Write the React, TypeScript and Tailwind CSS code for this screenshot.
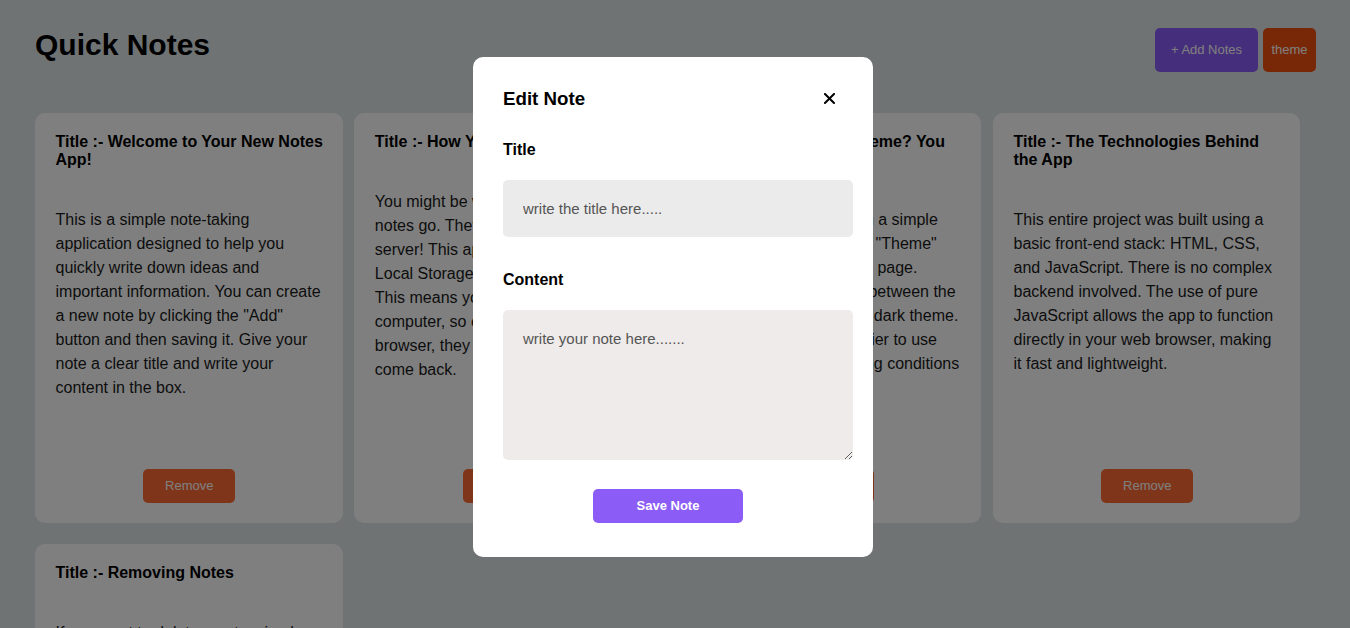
import { useState } from 'react';

type Note = { id: number; title: string; content: string };

const initialNotes: Note[] = [
  {
    id: 1,
    title: 'Welcome to Your New Notes App!',
    content:
      'This is a simple note-taking application designed to help you quickly write down ideas and important information. You can create a new note by clicking the "Add" button and then saving it. Give your note a clear title and write your content in the box.',
  },
  {
    id: 2,
    title: 'How Your Notes Are Saved',
    content:
      "You might be wondering where your notes go. They aren't stored on a server! This app uses your browser's Local Storage to save all your notes. This means your data stays on your computer, so even if you close the browser, they will be here when you come back.",
  },
  {
    id: 3,
    title: 'Prefer a Dark Theme? You Got It!',
    content:
      'This app also comes with a simple theme switcher. Click the "Theme" button near the top of the page. Clicking it lets you swap between the default light theme and a dark theme. A dark theme can be easier to use especially in dusky lighting conditions at night.',
  },
  {
    id: 4,
    title: 'The Technologies Behind the App',
    content:
      'This entire project was built using a basic front-end stack: HTML, CSS, and JavaScript. There is no complex backend involved. The use of pure JavaScript allows the app to function directly in your web browser, making it fast and lightweight.',
  },
  {
    id: 5,
    title: 'Removing Notes',
    content:
      'If you want to delete a note, simply find the note you no longer need and click the "Remove" button at the bottom of its card. The note will be deleted from your Local Storage right away.',
  },
];

function NoteCard({ note, onRemove }: { note: Note; onRemove: () => void }) {
  return (
    <div className="flex h-[410px] flex-col rounded-[10px] bg-white pb-[20px] pl-[20.5px] pr-[18.5px] pt-[20px]">
      <h3 className="text-[16px] font-bold leading-[18px] text-black">Title :- {note.title}</h3>
      <p className="mt-[39px] text-[16px] leading-[24px] text-[#1a1a1a]">{note.content}</p>
      <button
        type="button"
        onClick={onRemove}
        className="ml-[-1px] mt-auto h-[34px] w-[92px] self-center rounded-[5px] bg-[#ff6b35] text-[13px] text-white"
      >
        Remove
      </button>
    </div>
  );
}

export default function App() {
  const [notes, setNotes] = useState(initialNotes);
  const [showModal, setShowModal] = useState(true);
  const [title, setTitle] = useState('');
  const [content, setContent] = useState('');

  const handleSave = () => {
    if (title.trim() || content.trim()) {
      setNotes([...notes, { id: Date.now(), title, content }]);
    }
    setTitle('');
    setContent('');
    setShowModal(false);
  };

  return (
    <div className="min-h-screen bg-[#dfe6e9] px-[35px] pt-[26px] font-['Liberation_Sans',Arial,sans-serif]">
      <header className="flex items-start justify-between">
        <h1 className="text-[30px] font-bold leading-[37px] text-black">Quick Notes</h1>
        <div className="mr-[-1px] mt-[2px] flex gap-[5px]">
          <button
            type="button"
            onClick={() => setShowModal(true)}
            className="h-[44px] w-[103px] rounded-[5px] bg-[#8b5cf6] text-[13px] text-white"
          >
            + Add Notes
          </button>
          <button
            type="button"
            className="h-[44px] w-[53px] rounded-[5px] bg-[#f2500f] text-[13px] text-white"
          >
            theme
          </button>
        </div>
      </header>

      <div className="mt-[41px] grid grid-cols-[repeat(4,307.5px)] gap-x-[11.83px] gap-y-[21px] pb-[40px]">
        {notes.map((note) => (
          <NoteCard
            key={note.id}
            note={note}
            onRemove={() => setNotes(notes.filter((n) => n.id !== note.id))}
          />
        ))}
      </div>

      {/* Edit Note modal */}
      {showModal && (
        <div className="fixed inset-0 flex items-start justify-center bg-black/50 pr-[4px] pt-[57px]">
          <div className="w-[400px] rounded-[10px] bg-white px-[30px] pb-[34px] pt-[30px]">
            <div className="flex h-[23px] items-center justify-between">
              <h2 className="text-[18.72px] font-bold leading-[23px] text-black">Edit Note</h2>
              <button
                type="button"
                onClick={() => setShowModal(false)}
                className="mr-[8px] flex h-[12px] w-[12px] items-center justify-center"
              >
                <svg width="11" height="11" viewBox="0 0 11 11">
                  <path d="M1 1 L10 10 M10 1 L1 10" stroke="#000" strokeWidth="2" strokeLinecap="square" />
                </svg>
              </button>
            </div>

            <label className="mt-[31px] block text-[16px] font-bold leading-[18px] text-black">Title</label>
            <input
              type="text"
              value={title}
              onChange={(e) => setTitle(e.target.value)}
              placeholder="write the title here....."
              className="mt-[21px] block h-[57px] w-[350px] rounded-[5px] bg-[#ebebeb] px-[20px] text-[15px] text-[#333] outline-none placeholder:text-[#555]"
            />

            <label className="mt-[34px] block text-[16px] font-bold leading-[18px] text-black">Content</label>
            <textarea
              value={content}
              onChange={(e) => setContent(e.target.value)}
              placeholder="write your note here......."
              className="mt-[21px] block h-[150px] w-[350px] rounded-[5px] bg-[#eeebea] p-[20px] text-[15px] leading-[17px] text-[#333] outline-none placeholder:text-[#555]"
            />

            <button
              type="button"
              onClick={handleSave}
              className="ml-[90px] mt-[29px] block h-[34px] w-[150px] rounded-[5px] bg-[#8b5cf6] text-[13px] font-bold text-white"
            >
              Save Note
            </button>
          </div>
        </div>
      )}
    </div>
  );
}
